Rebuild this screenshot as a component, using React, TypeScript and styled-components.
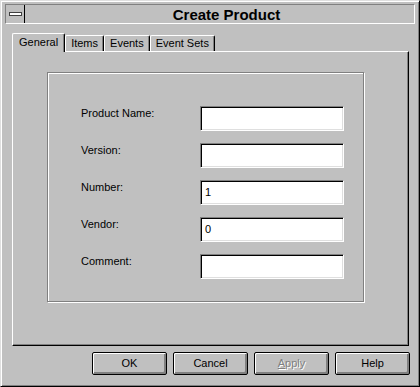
import React from "react";
import styled, { createGlobalStyle } from "styled-components";

const Global = createGlobalStyle`
  html, body { margin: 0; padding: 0; background: #c0c0c0; }
  * { box-sizing: border-box; }
  body { font-family: "Liberation Sans", Arial, sans-serif; font-size: 11px; color: #000; }
`;

const Window = styled.div`
  width: 420px;
  height: 387px;
  background: #c0c0c0;
  border: 1px solid;
  border-color: #dfdfdf #000 #000 #dfdfdf;
  box-shadow: inset 1px 1px 0 #fff, inset -1px -1px 0 #808080;
  padding: 3px 4px 0 4px;
  display: flex;
  flex-direction: column;
`;

const TitleBar = styled.div`
  height: 20px;
  display: flex;
  border: 1px solid;
  border-color: #808080 #fff #fff #808080;
`;

const SysMenu = styled.div`
  width: 19px;
  border-right: 1px solid #000;
  display: flex;
  align-items: center;
  justify-content: center;
`;

const SysGlyph = styled.div`
  width: 13px;
  height: 4px;
  margin-top: -1px;
  background: #fff;
  border: 1px solid #404040;
`;

const Title = styled.div`
  flex: 1;
  display: flex;
  align-items: center;
  justify-content: center;
  padding-left: 14px;
  font-weight: bold;
  font-size: 15px;
`;

const Body = styled.div`
  margin: 9px 6px 0 7px;
  display: flex;
  flex-direction: column;
`;

const TabRow = styled.div`
  display: flex;
  align-items: flex-start;
  height: 18px;
  position: relative;
  z-index: 1;
`;

const Tab = styled.div<{ $active?: boolean }>`
  height: ${(p) => (p.$active ? "19px" : "16px")};
  margin-top: ${(p) => (p.$active ? "0" : "2px")};
  padding: ${(p) => (p.$active ? "2px 6px 0 6px" : "1px 5px 0 5px")};
  background: #c0c0c0;
  border-top: 1px solid #fff;
  border-left: 1px solid #fff;
  border-right: 1px solid #000;
  border-radius: 2px 2px 0 0;
  box-shadow: inset -1px 0 0 #808080;
  line-height: 13px;
  white-space: nowrap;
`;

const Panel = styled.div`
  width: 397px;
  border: 1px solid;
  border-color: #fff #000 #000 #fff;
  box-shadow: inset -1px -1px 0 #808080;
  padding: 20px 0 43px 34px;
`;

const Group = styled.div`
  width: 317px;
  height: 230px;
  border: 1px solid #808080;
  box-shadow: 1px 1px 0 #fff, inset 1px 1px 0 #fff;
  padding: 33px 0 0 33px;
`;

const Form = styled.div`
  display: grid;
  grid-template-columns: 119px 144px;
  row-gap: 12px;
`;

const Label = styled.div`
  padding-top: 1px;
  line-height: 13px;
`;

const Field = styled.div`
  height: 25px;
  background: #fff;
  border: 1px solid;
  border-color: #808080 #fff #fff #808080;
  box-shadow: inset 1px 1px 0 #000, inset -1px -1px 0 #dfdfdf;
  padding: 5px 0 0 4px;
  line-height: 13px;
`;

const ButtonRow = styled.div`
  display: flex;
  justify-content: flex-end;
  gap: 6px;
  margin-top: 6px;
  padding-right: 5px;
`;

const Button = styled.div<{ $disabled?: boolean }>`
  width: 75px;
  height: 23px;
  border: 1px solid #000;
  border-radius: 2px;
  box-shadow: inset 1px 1px 0 #fff, inset -1px -1px 0 #808080, inset -2px -2px 0 #808080;
  display: flex;
  align-items: center;
  justify-content: center;
  padding-bottom: 1px;
  color: ${(p) => (p.$disabled ? "#808080" : "#000")};
  text-shadow: ${(p) => (p.$disabled ? "1px 1px 0 #fff" : "none")};
`;

const fields: [string, string][] = [
  ["Product Name:", ""],
  ["Version:", ""],
  ["Number:", "1"],
  ["Vendor:", "0"],
  ["Comment:", ""],
];

export default function App() {
  return (
    <>
      <Global />
      <Window>
        <TitleBar>
          <SysMenu>
            <SysGlyph />
          </SysMenu>
          <Title>Create Product</Title>
        </TitleBar>
        <Body>
          <TabRow>
            <Tab $active>General</Tab>
            <Tab>Items</Tab>
            <Tab>Events</Tab>
            <Tab>Event Sets</Tab>
          </TabRow>
          <Panel>
            <Group>
              <Form>
                {fields.map(([label, value]) => (
                  <React.Fragment key={label}>
                    <Label>{label}</Label>
                    <Field>{value}</Field>
                  </React.Fragment>
                ))}
              </Form>
            </Group>
          </Panel>
        </Body>
        <ButtonRow>
          <Button>OK</Button>
          <Button>Cancel</Button>
          <Button $disabled>
            <u>A</u>pply
          </Button>
          <Button>Help</Button>
        </ButtonRow>
      </Window>
    </>
  );
}
